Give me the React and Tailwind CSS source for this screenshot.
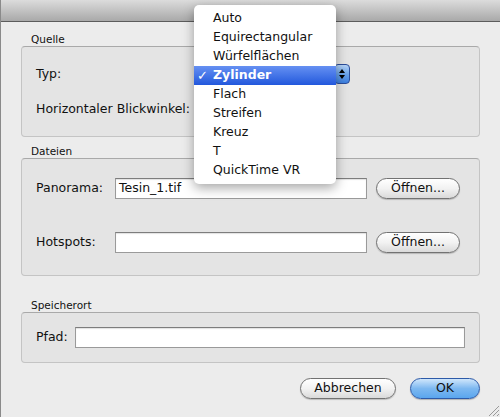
import React from "react";

const MENU_ITEMS = [
  "Auto",
  "Equirectangular",
  "Würfelflächen",
  "Zylinder",
  "Flach",
  "Streifen",
  "Kreuz",
  "T",
  "QuickTime VR",
];

const font = { fontFamily: '"DejaVu Sans", "Liberation Sans", sans-serif' };

function GroupBox({ title, className, children }) {
  return (
    <div className="flex flex-col">
      <div className="h-[13px] pl-[10px] text-[10.5px] leading-[13px] text-[#111]">{title}</div>
      <div
        className={
          "rounded-[4px] border border-[#c4c4c4] border-t-[#a9a9a9] bg-[#e4e4e4] pl-[14px] " + className
        }
      >
        {children}
      </div>
    </div>
  );
}

function AquaButton({ children, className = "" }) {
  return (
    <button
      className={
        "flex h-[21px] items-center justify-center rounded-full border border-[#727272] bg-gradient-to-b from-[#ffffff] via-[#f2f2f2] to-[#dadada] text-[12.5px] leading-none text-[#111] shadow-[0_1px_1px_rgba(0,0,0,0.2)] " +
        className
      }
    >
      {children}
    </button>
  );
}

function TextField({ value = "", className = "" }) {
  return (
    <div
      className={
        "flex h-[21px] items-center border border-[#9a9a9a] border-t-[#7d7d7d] bg-white pl-[3px] text-[12.5px] text-[#111] shadow-[inset_0_1px_1px_rgba(0,0,0,0.12)] " +
        className
      }
    >
      {value}
    </div>
  );
}

function PopupMenu() {
  return (
    <div className="absolute left-[193px] top-[5px] w-[142px] rounded-[5px] bg-white pb-[4px] pt-[4px] shadow-[0_4px_12px_rgba(0,0,0,0.35)]">
      {MENU_ITEMS.map((item) => {
        const selected = item === "Zylinder";
        return (
          <div
            key={item}
            className={
              "relative flex h-[19px] items-center pl-[19px] text-[12.5px] " +
              (selected
                ? "bg-gradient-to-b from-[#6590f2] to-[#2257dc] font-bold text-white"
                : "text-[#111]")
            }
          >
            {selected && <span className="absolute left-[3px] top-[0px] text-[13px] font-bold">✓</span>}
            {item}
          </div>
        );
      })}
    </div>
  );
}

export default function App() {
  return (
    <div
      className="relative h-[417px] w-[500px] overflow-hidden border-l border-[#8a8a8a] bg-[#ececec]"
      style={font}
    >
      {/* window title bar */}
      <div className="h-[22px] border-b border-[#5c5c5c] bg-gradient-to-b from-[#dcdcdc] to-[#a9a9a9]" />

      <div className="flex flex-col pl-[20px] pr-[20px] pt-[11px]">
        <GroupBox title="Quelle" className="h-[91px] pt-[17px]">
          <div className="flex h-[20px] items-center">
            <span className="w-[159px] text-[12.5px] text-[#111]">Typ:</span>
            <div className="ml-[139px] flex h-[20px] w-[16px] flex-col items-center justify-center gap-[2px] rounded-[4px] border border-[#2b4d9a] bg-gradient-to-b from-[#b6d4f7] via-[#6aa3ea] to-[#3c7fe0]">
              <div className="h-0 w-0 border-x-[3px] border-b-[4px] border-x-transparent border-b-black" />
              <div className="h-0 w-0 border-x-[3px] border-t-[4px] border-x-transparent border-t-black" />
            </div>
          </div>
          <div className="mt-[15px] flex h-[20px] items-center">
            <span className="text-[12.5px] text-[#111]">Horizontaler Blickwinkel:</span>
          </div>
        </GroupBox>

        <div className="mt-[8px]">
          <GroupBox title="Dateien" className="h-[118px] pt-[19px]">
            <div className="flex h-[21px] items-center">
              <span className="w-[79px] text-[12.5px] text-[#111]">Panorama:</span>
              <TextField value="Tesin_1.tif" className="w-[252px]" />
              <AquaButton className="ml-[9px] w-[84px]">Öffnen...</AquaButton>
            </div>
            <div className="mt-[33px] flex h-[21px] items-center">
              <span className="w-[79px] text-[12.5px] text-[#111]">Hotspots:</span>
              <TextField className="w-[252px]" />
              <AquaButton className="ml-[9px] w-[84px]">Öffnen...</AquaButton>
            </div>
          </GroupBox>
        </div>

        <div className="mt-[23px]">
          <GroupBox title="Speicherort" className="h-[51px] pt-[14px]">
            <div className="flex h-[21px] items-center pr-[14px]">
              <span className="w-[39px] text-[12.5px] text-[#111]">Pfad:</span>
              <TextField className="flex-1" />
            </div>
          </GroupBox>
        </div>

        <div className="mt-[15px] flex justify-end gap-[14px]">
          <AquaButton className="w-[96px]">Abbrechen</AquaButton>
          <button className="flex h-[21px] w-[70px] items-center justify-center rounded-full border border-[#2d5aa8] bg-gradient-to-b from-[#cfe6fb] via-[#7db8f0] to-[#5aa6ee] text-[12.5px] leading-none text-[#111] shadow-[0_1px_1px_rgba(0,0,0,0.25)]">
            OK
          </button>
        </div>
      </div>

      {/* resize grip */}
      <svg className="absolute bottom-0 right-0" width="14" height="14" viewBox="0 0 14 14">
        <path d="M13 3 L3 13 M13 7 L7 13 M13 11 L11 13" stroke="#9a9a9a" strokeWidth="1" />
      </svg>

      <PopupMenu />
    </div>
  );
}
